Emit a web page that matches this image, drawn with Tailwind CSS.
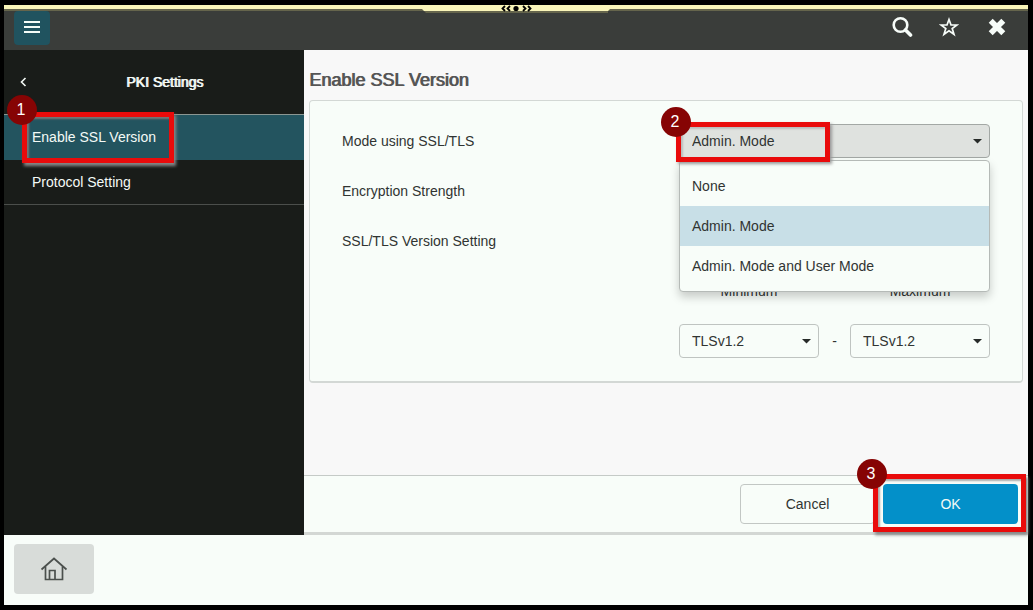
<!DOCTYPE html>
<html lang="en">

<head>
  <meta charset="UTF-8">
  <meta name="viewport" content="width=device-width, initial-scale=1.0">
  <title>PKI Settings | Enable SSL Version</title>
  <script src="https://cdn.jsdelivr.net/npm/@tailwindcss/browser@4"></script>
</head>

<body class="min-h-screen flex flex-col bg-black p-[5px] pl-1 font-['Liberation_Sans',Arial,sans-serif] text-sm text-[#303432]">

  <!-- Top bar -->
  <header class="relative h-[45px] bg-[#3a3d3a] border-t-4 border-[#f9f5b9] px-[10px] flex justify-between items-start">
    <div class="absolute inset-x-0 top-0 h-0.5 bg-[#65654c]"></div>
    <!-- pull-down handle -->
    <svg class="absolute -top-1 left-1/2 -translate-x-1/2 w-[190px] h-2" viewBox="0 0 190 8" aria-hidden="true">
      <path d="M0 0H190V3L187 6H3L0 3Z" fill="#f9f5b9" />
      <path d="M3 6H187V8H5Z" fill="#65654c" />
      <path d="M84 1L81.500 3.500L84 6M89 1L86.500 3.500L89 6M102 1L104.500 3.500L102 6M107 1L109.500 3.500L107 6" fill="none" stroke="#000" stroke-width="1.800" />
      <circle cx="95" cy="3.500" r="2.600" />
    </svg>

    <button class="relative mt-0.5 w-9 h-[34px] rounded bg-[#20535f] flex items-center justify-center" aria-label="Menu">
      <svg class="w-[18px] h-[18px]" viewBox="0 0 18 18" fill="#f5fcf8">
        <path d="M1 2h16v2H1zM1 7h16v2H1zM1 12h16v2H1z" />
      </svg>
    </button>

    <div class="mt-[7px] mr-[11px] flex items-center gap-[26px] text-[#f7fdf9]">
      <button aria-label="Search">
        <svg class="w-[22px] h-[22px]" viewBox="0 0 22 22" fill="none" stroke="currentColor">
          <circle cx="9.500" cy="9" r="6.800" stroke-width="2.600" />
          <path d="M14.500 14L19.500 19" stroke-width="3.600" stroke-linecap="round" />
        </svg>
      </button>
      <button aria-label="Favorites">
        <svg class="w-5 h-5" viewBox="0 0 20 20" fill="none" stroke="currentColor" stroke-width="1.700">
          <path d="M10 2.500L12 8H18L13.200 11.500L15 17.300L10 13.800L5 17.300L6.800 11.500L2 8H8Z" />
        </svg>
      </button>
      <button class="ml-0.5" aria-label="Close">
        <svg class="w-5 h-5" viewBox="0 0 20 20" fill="none" stroke="currentColor" stroke-width="5.600">
          <path d="M3.700 3.700L16.300 16.300M16.300 3.700L3.700 16.300" />
        </svg>
      </button>
    </div>
  </header>

  <div class="flex-1 flex">
    <!-- Side menu -->
    <nav class="w-[300px] shrink-0 bg-[#191c19] text-[#f4faf6]">
      <div class="h-16 flex items-center">
        <button class="pl-4" aria-label="Back">
          <svg class="w-[7px] h-[10px]" viewBox="0 0 7 10" fill="none" stroke="currentColor" stroke-width="1.600">
            <path d="M5.500 1L1.500 5L5.500 9" />
          </svg>
        </button>
        <h2 class="flex-1 pr-0.5 text-center [text-shadow:1px_0_0_currentColor]">PKI Settings</h2>
      </div>
      <ul>
        <li class="relative border-t border-[#8b9692]">
          <a href="#" class="h-[45px] px-7 pb-0.5 bg-[#23545f] flex items-center">Enable SSL Version</a>
          <div class="absolute -top-[3px] left-[18px] w-[152px] h-[51px] border-5 border-[#e90b0b] shadow-[2px_3px_3px_#888,inset_2px_2px_2px_#777]">
            <span class="absolute -top-[22px] -left-5 w-[30px] h-[30px] pr-0.5 rounded-full bg-[#860404] text-base text-white flex items-center justify-center">1</span>
          </div>
        </li>
        <li>
          <a href="#" class="h-[45px] px-7 border-b border-[#4b4e4b] flex items-center">Protocol Setting</a>
        </li>
      </ul>
    </nav>

    <main class="flex-1 bg-[#f8f8f8] flex flex-col">
      <form class="flex-1 flex flex-col">
        <div class="flex-1 px-[5px] pt-4">
          <h1 class="h-[34px] text-lg leading-7 text-[#555] [text-shadow:1px_0_0_currentColor]">Enable SSL Version</h1>

          <div class="rounded border border-[#d3d8d5] border-b-2 bg-[#f8fdf9] px-8 py-[15px]">
            <div class="h-[50px] flex items-center justify-between">
              <label for="mode">Mode using SSL/TLS</label>
              <div class="relative w-[311px]">
                <select id="mode" class="appearance-none w-full h-[34px] px-3 rounded border border-[#a3a8a5] bg-[#dfe2df]">
                  <option>Admin. Mode</option>
                  <option>None</option>
                  <option>Admin. Mode and User Mode</option>
                </select>
                <svg class="absolute right-2 top-[15px] w-[9px] h-[5px]" viewBox="0 0 9 5" fill="#272b29"><path d="M0 0H9L4.500 4.500Z" /></svg>

                <!-- open list -->
                <ul role="listbox" class="absolute z-10 top-full left-0 mt-0.5 w-full py-[5px] rounded border border-[#b5bab7] bg-[#f8fdf9] shadow-[0_5px_10px_rgba(0,0,0,0.2)]">
                  <li role="option" class="h-10 px-3 flex items-center">None</li>
                  <li role="option" aria-selected="true" class="h-10 px-3 bg-[#c8dfe7] flex items-center">Admin. Mode</li>
                  <li role="option" class="h-10 px-3 flex items-center">Admin. Mode and User Mode</li>
                </ul>

                <div class="absolute z-20 -top-0.5 -left-[3px] w-[154px] h-10 border-5 border-[#e90b0b] shadow-[2px_2px_3px_#999,inset_2px_2px_2px_#bbb]">
                  <span class="absolute -top-5 -left-5 w-[30px] h-[30px] pr-0.5 rounded-full bg-[#860404] text-base text-white flex items-center justify-center">2</span>
                </div>
              </div>
            </div>

            <div class="h-[50px] flex items-center">Encryption Strength</div>
            <div class="h-[50px] flex items-center">SSL/TLS Version Setting</div>

            <div class="ml-auto w-[311px] grid grid-cols-[140px_1fr_140px] auto-rows-[50px] items-center text-center">
              <label for="min">Minimum</label>
              <span></span>
              <label for="max">Maximum</label>
              <div class="relative">
                <select id="min" class="appearance-none w-full h-[34px] px-3 rounded border border-[#bfc4c1] bg-[#f8fdf9]">
                  <option>TLSv1.2</option>
                </select>
                <svg class="absolute right-2 top-[15px] w-[9px] h-[5px]" viewBox="0 0 9 5" fill="#272b29"><path d="M0 0H9L4.500 4.500Z" /></svg>
              </div>
              <span>-</span>
              <div class="relative">
                <select id="max" class="appearance-none w-full h-[34px] px-3 rounded border border-[#bfc4c1] bg-[#f8fdf9]">
                  <option>TLSv1.2</option>
                </select>
                <svg class="absolute right-2 top-[15px] w-[9px] h-[5px]" viewBox="0 0 9 5" fill="#272b29"><path d="M0 0H9L4.500 4.500Z" /></svg>
              </div>
            </div>
          </div>
        </div>

        <div class="h-[60px] border-t border-[#c5cac7] border-b-3 border-b-[#d3d7d4] bg-[#f8fdf9] px-[10px] pt-2 flex justify-end gap-2">
          <button type="button" class="w-[135px] h-10 rounded border border-[#c2c7c4]">Cancel</button>
          <div class="relative">
            <button type="submit" class="w-[135px] h-10 rounded bg-[#0390c9] text-[#f4faf6]">OK</button>
            <div class="absolute -top-[10px] -left-[10px] w-[153px] h-[58px] border-5 border-[#e90b0b] shadow-[2px_3px_3px_#888,inset_2px_2px_2px_#aaa]">
              <span class="absolute -top-5 -left-[21px] w-[30px] h-[30px] pr-0.5 rounded-full bg-[#860404] text-base text-white flex items-center justify-center">3</span>
            </div>
          </div>
        </div>
      </form>
    </main>
  </div>

  <footer class="h-[70px] bg-[#f8fdf9] px-[10px] pt-[9px]">
    <button class="w-20 h-[50px] rounded-sm bg-[#d8dcd9] flex items-center justify-center" aria-label="Home">
      <svg class="w-7 h-6" viewBox="0 0 28 24" fill="none" stroke="#4b504d" stroke-width="1.700">
        <path d="M1.500 12.500L14 1.500L26.500 12.500" />
        <path d="M5.500 9.500V22.500H22.500V9.500M9.500 22.500V13.500H15V22.500" />
      </svg>
    </button>
  </footer>

</body>

</html>
